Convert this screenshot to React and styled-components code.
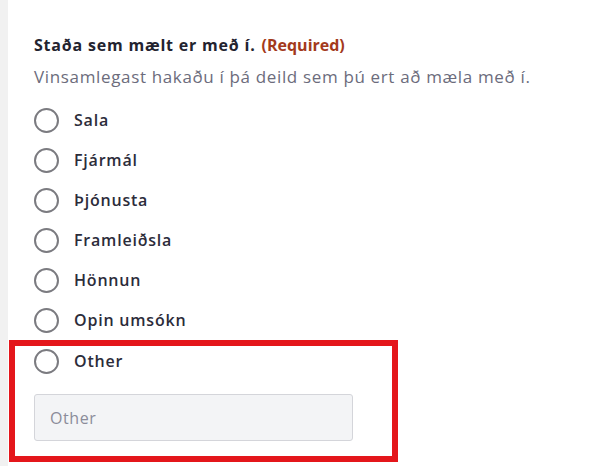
import React from 'react';
import styled, { createGlobalStyle } from 'styled-components';

const GlobalStyle = createGlobalStyle`
  html, body {
    margin: 0;
    padding: 0;
    background: #ffffff;
  }
  body {
    font-family: "Open Sans", "Noto Sans", Arial, sans-serif;
  }
`;

const Page = styled.div`
  display: flex;
  width: 597px;
  height: 466px;
  overflow: hidden;
  background: #ffffff;
`;

const SideStrip = styled.div`
  width: 8px;
  flex-shrink: 0;
  background: #f1f1f1;
`;

const Content = styled.div`
  flex: 1;
  padding: 33px 0 0 26px;
`;

const Title = styled.div`
  font-size: 16px;
  line-height: 24px;
  font-weight: 700;
  letter-spacing: 0.8px;
  color: #23232f;
`;

const Required = styled.span`
  color: #a33a1c;
  letter-spacing: 0;
  margin-left: 6px;
`;

const Hint = styled.div`
  margin-top: 8px;
  font-size: 17px;
  line-height: 24px;
  letter-spacing: 0.65px;
  color: #6c6c7c;
`;

const Options = styled.div`
  margin-top: 11px;
  display: flex;
  flex-direction: column;
`;

const Option = styled.label`
  display: flex;
  align-items: center;
  height: ${p => p.$h || 40}px;
  gap: 15px;
  cursor: pointer;
`;

const Radio = styled.span`
  width: 21px;
  height: 21px;
  border: 2px solid #7b7b80;
  border-radius: 50%;
  flex-shrink: 0;
  background: #fff;
`;

const OptionText = styled.span`
  font-size: 16px;
  font-weight: 600;
  letter-spacing: 0.8px;
  color: #2c2c3a;
`;

const Highlight = styled.div`
  margin-left: -25px;
  width: 358px;
  border: 6px solid #e4161b;
  padding: 0 0 15px 19px;
`;

const OtherInput = styled.input`
  display: block;
  box-sizing: border-box;
  margin-top: 18px;
  width: 319px;
  height: 47px;
  padding: 0 15px;
  border: 1px solid #d4d5da;
  border-radius: 3px;
  background: #f3f4f6;
  font-family: inherit;
  font-size: 16px;
  letter-spacing: 0.6px;
  color: #2c2c3a;
  outline: none;

  &::placeholder {
    color: #8b8c9a;
  }
`;

const choices = ['Sala', 'Fjármál', 'Þjónusta', 'Framleiðsla', 'Hönnun', 'Opin umsókn'];

export default function App() {
  return (
    <>
      <GlobalStyle />
      <Page>
        <SideStrip />
        <Content>
          <Title>
            Staða sem mælt er með í.<Required>(Required)</Required>
          </Title>
          <Hint>Vinsamlegast hakaðu í þá deild sem þú ert að mæla með í.</Hint>
          <Options>
            {choices.map(c => (
              <Option key={c}>
                <Radio />
                <OptionText>{c}</OptionText>
              </Option>
            ))}
          </Options>
          <Highlight>
            <Option $h={30}>
              <Radio />
              <OptionText>Other</OptionText>
            </Option>
            <OtherInput placeholder="Other" />
          </Highlight>
        </Content>
      </Page>
    </>
  );
}
